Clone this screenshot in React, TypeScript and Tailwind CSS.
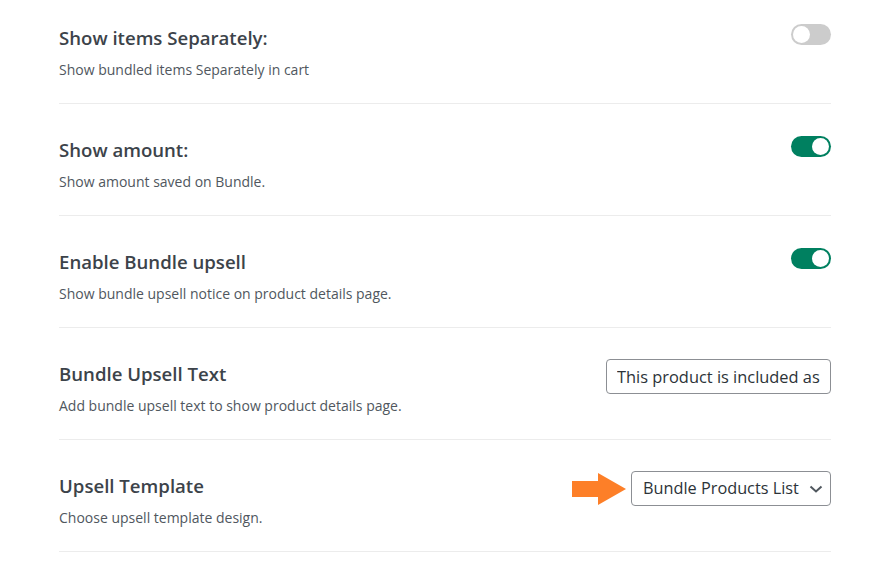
import { useState } from "react";

type Row = {
  title: string;
  desc: string;
  kind: "toggle" | "input" | "select";
  on?: boolean;
};

const rows: Row[] = [
  { title: "Show items Separately:", desc: "Show bundled items Separately in cart", kind: "toggle", on: false },
  { title: "Show amount:", desc: "Show amount saved on Bundle.", kind: "toggle", on: true },
  { title: "Enable Bundle upsell", desc: "Show bundle upsell notice on product details page.", kind: "toggle", on: true },
  { title: "Bundle Upsell Text", desc: "Add bundle upsell text to show product details page.", kind: "input" },
  { title: "Upsell Template", desc: "Choose upsell template design.", kind: "select" },
];

const Toggle = ({ initial }: { initial: boolean }) => {
  const [on, setOn] = useState(initial);
  return (
    <button
      onClick={() => setOn(!on)}
      className={`mt-px flex h-[21px] w-10 items-center rounded-full p-[2px] ${
        on ? "justify-end bg-[#008060]" : "justify-start bg-[#cccccc]"
      }`}
    >
      <span className="h-[17px] w-[17px] rounded-full bg-white" />
    </button>
  );
};

const Arrow = () => (
  <svg width="54" height="32" viewBox="0 0 54 32" className="mr-[5px]">
    <path d="M0 8h26V0l28 16-28 16v-8H0z" fill="#fd7f28" />
  </svg>
);

export default function App() {
  return (
    <div className="min-h-screen bg-white font-['Open_Sans',sans-serif]">
      <div className="ml-[59px] w-[772px]">
        {rows.map((row, i) => (
          <div
            key={row.title}
            className={`flex items-start justify-between border-b border-[#ececec] pb-[23px] ${
              i === 0 ? "pt-[23px]" : "pt-[31px]"
            }`}
          >
            <div>
              <div className="text-[18.6px] font-semibold leading-[30px] text-[#3c434a]">{row.title}</div>
              <div className="mt-[7px] text-[14px] leading-5 text-[#50575e]">{row.desc}</div>
            </div>
            {row.kind === "toggle" && <Toggle initial={!!row.on} />}
            {row.kind === "input" && (
              <input
                defaultValue="This product is included as a part of bundle"
                className="h-[35px] w-[225px] rounded border border-[#8c8f94] px-[10px] text-[16.4px] text-[#2c3338] outline-none"
              />
            )}
            {row.kind === "select" && (
              <div className="flex items-center">
                <Arrow />
                <button className="flex h-[35px] w-[200px] items-center justify-between rounded border border-[#8c8f94] pl-[11px] pr-[7px] text-[16.3px] text-[#2c3338]">
                  <span>Bundle Products List</span>
                  <svg width="14" height="8" viewBox="0 0 14 8">
                    <path d="M1.5 1.5 7 6.5l5.5-5" fill="none" stroke="#50575e" strokeWidth="2" />
                  </svg>
                </button>
              </div>
            )}
          </div>
        ))}
      </div>
    </div>
  );
}
